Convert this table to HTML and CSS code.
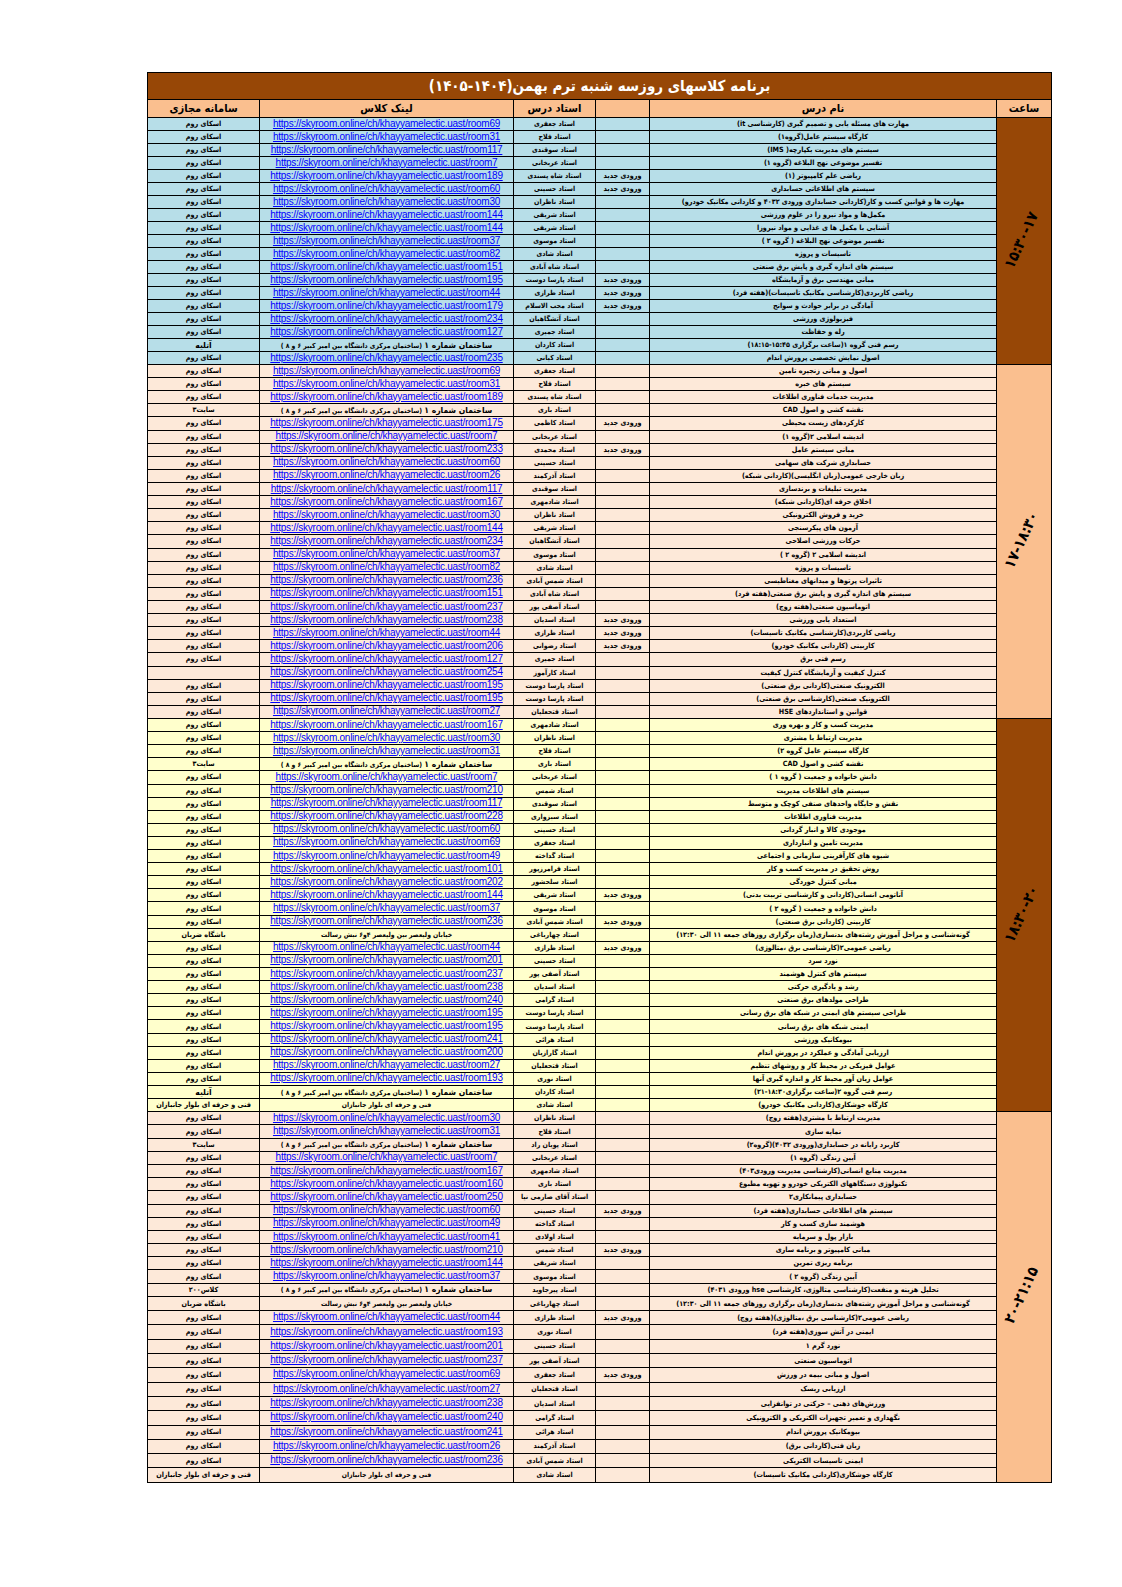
FILE: index.html
```html
<!DOCTYPE html>
<html lang="fa">
<head>
<meta charset="utf-8">
<title>برنامه کلاسهای روز سه شنبه</title>
<link rel="stylesheet" href="styles.css">
</head>
<body>
<div class="page">
<table class="sched" dir="rtl">
<colgroup>
<col class="c-time"><col class="c-name"><col class="c-entry"><col class="c-teacher"><col class="c-link"><col class="c-plat">
</colgroup>
<tbody>
<tr class="title"><td colspan="6">برنامه کلاسهای  روزسه شنبه ترم بهمن(۱۴۰۴-۱۴۰۵)</td></tr>
<tr class="head"><td>ساعت</td><td>نام درس</td><td></td><td>استاد درس</td><td>لینک کلاس</td><td>سامانه مجازی</td></tr>

<tr class="g1"><td class="time dark" rowspan="19"><span class="tl">۱۵:۳۰-۱۷</span></td><td>مهارت های مسئله یابی و تصمیم گیری (کارشناسی it)</td><td></td><td class="t">استاد جعفری</td><td class="l"><a href="https://skyroom.online/ch/khayyamelectic.uast/room69">https://skyroom.online/ch/khayyamelectic.uast/room69</a></td><td>اسکای روم</td></tr>
<tr class="g1"><td>کارگاه سیستم عامل(گروه۱)</td><td></td><td class="t">استاد فلاح</td><td class="l"><a href="https://skyroom.online/ch/khayyamelectic.uast/room31">https://skyroom.online/ch/khayyamelectic.uast/room31</a></td><td>اسکای روم</td></tr>
<tr class="g1"><td>سیستم های مدیریت یکپارچه( IMS)</td><td></td><td class="t">استاد سوقندی</td><td class="l"><a href="https://skyroom.online/ch/khayyamelectic.uast/room117">https://skyroom.online/ch/khayyamelectic.uast/room117</a></td><td>اسکای روم</td></tr>
<tr class="g1"><td>تفسیر موضوعی نهج البلاغه (گروه ۱)</td><td></td><td class="t">استاد عربخانی</td><td class="l"><a href="https://skyroom.online/ch/khayyamelectic.uast/room7">https://skyroom.online/ch/khayyamelectic.uast/room7</a></td><td>اسکای روم</td></tr>
<tr class="g1"><td>ریاضی علم کامپیوتر (۱)</td><td>ورودی جدید</td><td class="t">استاد شاه پسندی</td><td class="l"><a href="https://skyroom.online/ch/khayyamelectic.uast/room189">https://skyroom.online/ch/khayyamelectic.uast/room189</a></td><td>اسکای روم</td></tr>
<tr class="g1"><td>سیستم های اطلاعاتی حسابداری</td><td>ورودی جدید</td><td class="t">استاد حسینی</td><td class="l"><a href="https://skyroom.online/ch/khayyamelectic.uast/room60">https://skyroom.online/ch/khayyamelectic.uast/room60</a></td><td>اسکای روم</td></tr>
<tr class="g1"><td>مهارت ها و قوانین کسب و کار(کاردانی حسابداری ورودی ۴۰۳۲ و کاردانی مکانیک خودرو)</td><td></td><td class="t">استاد ناظران</td><td class="l"><a href="https://skyroom.online/ch/khayyamelectic.uast/room30">https://skyroom.online/ch/khayyamelectic.uast/room30</a></td><td>اسکای روم</td></tr>
<tr class="g1"><td>مکمل‌ها و مواد نیرو زا در علوم ورزشی</td><td></td><td class="t">استاد شریفی</td><td class="l"><a href="https://skyroom.online/ch/khayyamelectic.uast/room144">https://skyroom.online/ch/khayyamelectic.uast/room144</a></td><td>اسکای روم</td></tr>
<tr class="g1"><td>آشنایی با مکمل ها ی غذایی و مواد نیروزا</td><td></td><td class="t">استاد شریفی</td><td class="l"><a href="https://skyroom.online/ch/khayyamelectic.uast/room144">https://skyroom.online/ch/khayyamelectic.uast/room144</a></td><td>اسکای روم</td></tr>
<tr class="g1"><td>تفسیر موضوعی نهج البلاغه ( گروه ۲ )</td><td></td><td class="t">استاد موسوی</td><td class="l"><a href="https://skyroom.online/ch/khayyamelectic.uast/room37">https://skyroom.online/ch/khayyamelectic.uast/room37</a></td><td>اسکای روم</td></tr>
<tr class="g1"><td>تاسیسات و پروژه</td><td></td><td class="t">استاد شادی</td><td class="l"><a href="https://skyroom.online/ch/khayyamelectic.uast/room82">https://skyroom.online/ch/khayyamelectic.uast/room82</a></td><td>اسکای روم</td></tr>
<tr class="g1"><td>سیستم های اندازه گیری و پایش برق صنعتی</td><td></td><td class="t">استاد شاه آبادی</td><td class="l"><a href="https://skyroom.online/ch/khayyamelectic.uast/room151">https://skyroom.online/ch/khayyamelectic.uast/room151</a></td><td>اسکای روم</td></tr>
<tr class="g1"><td>مبانی  مهندسی برق و آزمایشگاه</td><td>ورودی جدید</td><td class="t">استاد پارسا دوست</td><td class="l"><a href="https://skyroom.online/ch/khayyamelectic.uast/room195">https://skyroom.online/ch/khayyamelectic.uast/room195</a></td><td>اسکای روم</td></tr>
<tr class="g1"><td>ریاضی کاربردی(کارشناسی مکانیک تاسیسات)(هفته فرد)</td><td>ورودی جدید</td><td class="t">استاد طرازی</td><td class="l"><a href="https://skyroom.online/ch/khayyamelectic.uast/room44">https://skyroom.online/ch/khayyamelectic.uast/room44</a></td><td>اسکای روم</td></tr>
<tr class="g1"><td>آمادگی در برابر حوادث و سوانح</td><td>ورودی جدید</td><td class="t">استاد محب الاسلام</td><td class="l"><a href="https://skyroom.online/ch/khayyamelectic.uast/room179">https://skyroom.online/ch/khayyamelectic.uast/room179</a></td><td>اسکای روم</td></tr>
<tr class="g1"><td>فیزیولوژی ورزشی</td><td></td><td class="t">استاد آتشگاهیان</td><td class="l"><a href="https://skyroom.online/ch/khayyamelectic.uast/room234">https://skyroom.online/ch/khayyamelectic.uast/room234</a></td><td>اسکای روم</td></tr>
<tr class="g1"><td>رله و حفاظت</td><td></td><td class="t">استاد جمیری</td><td class="l"><a href="https://skyroom.online/ch/khayyamelectic.uast/room127">https://skyroom.online/ch/khayyamelectic.uast/room127</a></td><td>اسکای روم</td></tr>
<tr class="g1"><td>رسم فنی گروه ۱(ساعت برگزاری ۱۵:۴۵-۱۸:۱۵)</td><td></td><td class="t">استاد کاردان</td><td class="loc"><span class="big">ساختمان شماره ۱</span>  (ساختمان مرکزی دانشگاه بین امیر کبیر ۶ و ۸ )</td><td class="pl">آتلیه</td></tr>
<tr class="g1"><td>اصول نمایش تخصصی پرورش اندام</td><td></td><td class="t">استاد کیانی</td><td class="l"><a href="https://skyroom.online/ch/khayyamelectic.uast/room235">https://skyroom.online/ch/khayyamelectic.uast/room235</a></td><td>اسکای روم</td></tr>

<tr class="g2"><td class="time light" rowspan="27"><span class="tl">۱۷-۱۸:۳۰</span></td><td>اصول و مبانی زنجیره تامین</td><td></td><td class="t">استاد جعفری</td><td class="l"><a href="https://skyroom.online/ch/khayyamelectic.uast/room69">https://skyroom.online/ch/khayyamelectic.uast/room69</a></td><td>اسکای روم</td></tr>
<tr class="g2"><td>سیستم های خبره</td><td></td><td class="t">استاد فلاح</td><td class="l"><a href="https://skyroom.online/ch/khayyamelectic.uast/room31">https://skyroom.online/ch/khayyamelectic.uast/room31</a></td><td>اسکای روم</td></tr>
<tr class="g2"><td>مدیریت خدمات فناوری اطلاعات</td><td></td><td class="t">استاد شاه پسندی</td><td class="l"><a href="https://skyroom.online/ch/khayyamelectic.uast/room189">https://skyroom.online/ch/khayyamelectic.uast/room189</a></td><td>اسکای روم</td></tr>
<tr class="g2"><td>نقشه کشی و اصول CAD</td><td></td><td class="t">استاد باری</td><td class="loc"><span class="big">ساختمان شماره ۱</span>  (ساختمان مرکزی دانشگاه بین امیر کبیر ۶ و ۸ )</td><td>سایت۳</td></tr>
<tr class="g2"><td>کارکردهای زیست محیطی</td><td>ورودی جدید</td><td class="t">استاد کاظمی</td><td class="l"><a href="https://skyroom.online/ch/khayyamelectic.uast/room175">https://skyroom.online/ch/khayyamelectic.uast/room175</a></td><td>اسکای روم</td></tr>
<tr class="g2"><td>اندیشه اسلامی ۲(گروه ۱)</td><td></td><td class="t">استاد عربخانی</td><td class="l"><a href="https://skyroom.online/ch/khayyamelectic.uast/room7">https://skyroom.online/ch/khayyamelectic.uast/room7</a></td><td>اسکای روم</td></tr>
<tr class="g2"><td>مبانی سیستم عامل</td><td>ورودی جدید</td><td class="t">استاد محمدی</td><td class="l"><a href="https://skyroom.online/ch/khayyamelectic.uast/room233">https://skyroom.online/ch/khayyamelectic.uast/room233</a></td><td>اسکای روم</td></tr>
<tr class="g2"><td>حسابداری شرکت های سهامی</td><td></td><td class="t">استاد حسینی</td><td class="l"><a href="https://skyroom.online/ch/khayyamelectic.uast/room60">https://skyroom.online/ch/khayyamelectic.uast/room60</a></td><td>اسکای روم</td></tr>
<tr class="g2"><td>زبان خارجی عمومی(زبان انگلیسی)(کاردانی شبکه)</td><td></td><td class="t">استاد آذرکمند</td><td class="l"><a href="https://skyroom.online/ch/khayyamelectic.uast/room26">https://skyroom.online/ch/khayyamelectic.uast/room26</a></td><td>اسکای روم</td></tr>
<tr class="g2"><td>مدیریت تبلیغات و برندسازی</td><td></td><td class="t">استاد سوقندی</td><td class="l"><a href="https://skyroom.online/ch/khayyamelectic.uast/room117">https://skyroom.online/ch/khayyamelectic.uast/room117</a></td><td>اسکای روم</td></tr>
<tr class="g2"><td>اخلاق حرفه ای(کاردانی شبکه)</td><td></td><td class="t">استاد شادمهری</td><td class="l"><a href="https://skyroom.online/ch/khayyamelectic.uast/room167">https://skyroom.online/ch/khayyamelectic.uast/room167</a></td><td>اسکای روم</td></tr>
<tr class="g2"><td>خرید و فروش الکترونیکی</td><td></td><td class="t">استاد ناظران</td><td class="l"><a href="https://skyroom.online/ch/khayyamelectic.uast/room30">https://skyroom.online/ch/khayyamelectic.uast/room30</a></td><td>اسکای روم</td></tr>
<tr class="g2"><td>آزمون های پیکرسنجی</td><td></td><td class="t">استاد شریفی</td><td class="l"><a href="https://skyroom.online/ch/khayyamelectic.uast/room144">https://skyroom.online/ch/khayyamelectic.uast/room144</a></td><td>اسکای روم</td></tr>
<tr class="g2"><td>حرکات ورزشی اصلاحی</td><td></td><td class="t">استاد آتشگاهیان</td><td class="l"><a href="https://skyroom.online/ch/khayyamelectic.uast/room234">https://skyroom.online/ch/khayyamelectic.uast/room234</a></td><td>اسکای روم</td></tr>
<tr class="g2"><td>اندیشه اسلامی ۲ (گروه ۲ )</td><td></td><td class="t">استاد موسوی</td><td class="l"><a href="https://skyroom.online/ch/khayyamelectic.uast/room37">https://skyroom.online/ch/khayyamelectic.uast/room37</a></td><td>اسکای روم</td></tr>
<tr class="g2"><td>تاسیسات و پروژه</td><td></td><td class="t">استاد شادی</td><td class="l"><a href="https://skyroom.online/ch/khayyamelectic.uast/room82">https://skyroom.online/ch/khayyamelectic.uast/room82</a></td><td>اسکای روم</td></tr>
<tr class="g2"><td>تاثیرات پرتوها و میدانهای مغناطیسی</td><td></td><td class="t">استاد شمس آبادی</td><td class="l"><a href="https://skyroom.online/ch/khayyamelectic.uast/room236">https://skyroom.online/ch/khayyamelectic.uast/room236</a></td><td>اسکای روم</td></tr>
<tr class="g2"><td>سیستم های اندازه گیری و پایش برق صنعتی(هفته فرد)</td><td></td><td class="t">استاد شاه آبادی</td><td class="l"><a href="https://skyroom.online/ch/khayyamelectic.uast/room151">https://skyroom.online/ch/khayyamelectic.uast/room151</a></td><td>اسکای روم</td></tr>
<tr class="g2"><td>اتوماسیون صنعتی(هفته زوج)</td><td></td><td class="t">استاد آصفی پور</td><td class="l"><a href="https://skyroom.online/ch/khayyamelectic.uast/room237">https://skyroom.online/ch/khayyamelectic.uast/room237</a></td><td>اسکای روم</td></tr>
<tr class="g2"><td>استعداد یابی ورزشی</td><td>ورودی جدید</td><td class="t">استاد اسدیان</td><td class="l"><a href="https://skyroom.online/ch/khayyamelectic.uast/room238">https://skyroom.online/ch/khayyamelectic.uast/room238</a></td><td>اسکای روم</td></tr>
<tr class="g2"><td>ریاضی کاربردی(کارشناسی مکانیک تاسیسات)</td><td>ورودی جدید</td><td class="t">استاد طرازی</td><td class="l"><a href="https://skyroom.online/ch/khayyamelectic.uast/room44">https://skyroom.online/ch/khayyamelectic.uast/room44</a></td><td>اسکای روم</td></tr>
<tr class="g2"><td>کاربینی (کاردانی مکانیک خودرو)</td><td>ورودی جدید</td><td class="t">استاد رضوانی</td><td class="l"><a href="https://skyroom.online/ch/khayyamelectic.uast/room206">https://skyroom.online/ch/khayyamelectic.uast/room206</a></td><td>اسکای روم</td></tr>
<tr class="g2"><td>رسم فنی برق</td><td></td><td class="t">استاد جمیری</td><td class="l"><a href="https://skyroom.online/ch/khayyamelectic.uast/room127">https://skyroom.online/ch/khayyamelectic.uast/room127</a></td><td>اسکای روم</td></tr>
<tr class="g2"><td>کنترل کیفیت و آزمایشگاه کنترل کیفیت</td><td></td><td class="t">استاد کارآموز</td><td class="l"><a href="https://skyroom.online/ch/khayyamelectic.uast/room254">https://skyroom.online/ch/khayyamelectic.uast/room254</a></td><td></td></tr>
<tr class="g2"><td>الکترونیک صنعتی(کاردانی برق صنعتی)</td><td></td><td class="t">استاد پارسا دوست</td><td class="l"><a href="https://skyroom.online/ch/khayyamelectic.uast/room195">https://skyroom.online/ch/khayyamelectic.uast/room195</a></td><td>اسکای روم</td></tr>
<tr class="g2"><td>الکترونیک صنعتی(کارشناسی  برق صنعتی)</td><td></td><td class="t">استاد پارسا دوست</td><td class="l"><a href="https://skyroom.online/ch/khayyamelectic.uast/room195">https://skyroom.online/ch/khayyamelectic.uast/room195</a></td><td>اسکای روم</td></tr>
<tr class="g2"><td>قوانین و استانداردهای HSE</td><td></td><td class="t">استاد فتحعلیان</td><td class="l"><a href="https://skyroom.online/ch/khayyamelectic.uast/room27">https://skyroom.online/ch/khayyamelectic.uast/room27</a></td><td>اسکای روم</td></tr>

<tr class="g3"><td class="time dark" rowspan="30"><span class="tl">۱۸:۳۰-۲۰</span></td><td>مدیریت کسب و کار و بهره وری</td><td></td><td class="t">استاد شادمهری</td><td class="l"><a href="https://skyroom.online/ch/khayyamelectic.uast/room167">https://skyroom.online/ch/khayyamelectic.uast/room167</a></td><td>اسکای روم</td></tr>
<tr class="g3"><td>مدیریت ارتباط با مشتری</td><td></td><td class="t">استاد ناظران</td><td class="l"><a href="https://skyroom.online/ch/khayyamelectic.uast/room30">https://skyroom.online/ch/khayyamelectic.uast/room30</a></td><td>اسکای روم</td></tr>
<tr class="g3"><td>کارگاه سیستم عامل گروه ۲)</td><td></td><td class="t">استاد فلاح</td><td class="l"><a href="https://skyroom.online/ch/khayyamelectic.uast/room31">https://skyroom.online/ch/khayyamelectic.uast/room31</a></td><td>اسکای روم</td></tr>
<tr class="g3"><td>نقشه کشی و اصول CAD</td><td></td><td class="t">استاد باری</td><td class="loc"><span class="big">ساختمان شماره ۱</span>  (ساختمان مرکزی دانشگاه بین امیر کبیر ۶ و ۸ )</td><td>سایت۳</td></tr>
<tr class="g3"><td>دانش خانواده و جمعیت ( گروه ۱ )</td><td></td><td class="t">استاد عربخانی</td><td class="l"><a href="https://skyroom.online/ch/khayyamelectic.uast/room7">https://skyroom.online/ch/khayyamelectic.uast/room7</a></td><td>اسکای روم</td></tr>
<tr class="g3"><td>سیستم  های اطلاعات مدیریت</td><td></td><td class="t">استاد شمس</td><td class="l"><a href="https://skyroom.online/ch/khayyamelectic.uast/room210">https://skyroom.online/ch/khayyamelectic.uast/room210</a></td><td>اسکای روم</td></tr>
<tr class="g3"><td>نقش و جایگاه واحدهای صنفی کوچک و متوسط</td><td></td><td class="t">استاد سوقندی</td><td class="l"><a href="https://skyroom.online/ch/khayyamelectic.uast/room117">https://skyroom.online/ch/khayyamelectic.uast/room117</a></td><td>اسکای روم</td></tr>
<tr class="g3"><td>مدیریت فناوری اطلاعات</td><td></td><td class="t">استاد سبزواری</td><td class="l"><a href="https://skyroom.online/ch/khayyamelectic.uast/room228">https://skyroom.online/ch/khayyamelectic.uast/room228</a></td><td>اسکای روم</td></tr>
<tr class="g3"><td>موجودی کالا و انبار گردانی</td><td></td><td class="t">استاد حسینی</td><td class="l"><a href="https://skyroom.online/ch/khayyamelectic.uast/room60">https://skyroom.online/ch/khayyamelectic.uast/room60</a></td><td>اسکای روم</td></tr>
<tr class="g3"><td>مدیریت تامین و انبارداری</td><td></td><td class="t">استاد جعفری</td><td class="l"><a href="https://skyroom.online/ch/khayyamelectic.uast/room69">https://skyroom.online/ch/khayyamelectic.uast/room69</a></td><td>اسکای روم</td></tr>
<tr class="g3"><td>شیوه های کارآفرینی سازمانی و اجتماعی</td><td></td><td class="t">استاد گداخته</td><td class="l"><a href="https://skyroom.online/ch/khayyamelectic.uast/room49">https://skyroom.online/ch/khayyamelectic.uast/room49</a></td><td>اسکای روم</td></tr>
<tr class="g3"><td>روش تحقیق در مدیریت کسب و کار</td><td></td><td class="t">استاد فرامرزپور</td><td class="l"><a href="https://skyroom.online/ch/khayyamelectic.uast/room101">https://skyroom.online/ch/khayyamelectic.uast/room101</a></td><td>اسکای روم</td></tr>
<tr class="g3"><td>مبانی کنترل خوردگی</td><td></td><td class="t">استاد سلحشور</td><td class="l"><a href="https://skyroom.online/ch/khayyamelectic.uast/room202">https://skyroom.online/ch/khayyamelectic.uast/room202</a></td><td>اسکای روم</td></tr>
<tr class="g3"><td>آناتومی انسانی(کاردانی و کارشناسی تربیت بدنی)</td><td>ورودی جدید</td><td class="t">استاد شریفی</td><td class="l"><a href="https://skyroom.online/ch/khayyamelectic.uast/room144">https://skyroom.online/ch/khayyamelectic.uast/room144</a></td><td>اسکای روم</td></tr>
<tr class="g3"><td>دانش خانواده و جمعیت ( گروه ۲ )</td><td></td><td class="t">استاد موسوی</td><td class="l"><a href="https://skyroom.online/ch/khayyamelectic.uast/room37">https://skyroom.online/ch/khayyamelectic.uast/room37</a></td><td>اسکای روم</td></tr>
<tr class="g3"><td>کاربینی (کاردانی برق صنعتی)</td><td>ورودی جدید</td><td class="t">استاد شمس آبادی</td><td class="l"><a href="https://skyroom.online/ch/khayyamelectic.uast/room236">https://skyroom.online/ch/khayyamelectic.uast/room236</a></td><td>اسکای روم</td></tr>
<tr class="g3"><td>گونه‌شناسی و مراحل آموزش رشته‌های بدنسازی(زمان برگزاری روزهای جمعه ۱۱ الی ۱۲:۳۰)</td><td></td><td class="t">استاد چهارباغی</td><td class="loc">خیابان ولیعصر بین ولیعصر ۴و۶ نبش رسالت</td><td>باشگاه ضربان</td></tr>
<tr class="g3"><td>ریاضی عمومی۲(کارشناسی برق ،متالوژی)</td><td>ورودی جدید</td><td class="t">استاد طرازی</td><td class="l"><a href="https://skyroom.online/ch/khayyamelectic.uast/room44">https://skyroom.online/ch/khayyamelectic.uast/room44</a></td><td>اسکای روم</td></tr>
<tr class="g3"><td>نورد سرد</td><td></td><td class="t">استاد حسینی</td><td class="l"><a href="https://skyroom.online/ch/khayyamelectic.uast/room201">https://skyroom.online/ch/khayyamelectic.uast/room201</a></td><td>اسکای روم</td></tr>
<tr class="g3"><td>سیستم های کنترل هوشمند</td><td></td><td class="t">استاد آصفی پور</td><td class="l"><a href="https://skyroom.online/ch/khayyamelectic.uast/room237">https://skyroom.online/ch/khayyamelectic.uast/room237</a></td><td>اسکای روم</td></tr>
<tr class="g3"><td>رشد و یادگیری حرکتی</td><td></td><td class="t">استاد اسدیان</td><td class="l"><a href="https://skyroom.online/ch/khayyamelectic.uast/room238">https://skyroom.online/ch/khayyamelectic.uast/room238</a></td><td>اسکای روم</td></tr>
<tr class="g3"><td>طراحی مولدهای برق صنعتی</td><td></td><td class="t">استاد گرامی</td><td class="l"><a href="https://skyroom.online/ch/khayyamelectic.uast/room240">https://skyroom.online/ch/khayyamelectic.uast/room240</a></td><td>اسکای روم</td></tr>
<tr class="g3"><td>طراحی سیستم های ایمنی در شبکه های برق رسانی</td><td></td><td class="t">استاد پارسا دوست</td><td class="l"><a href="https://skyroom.online/ch/khayyamelectic.uast/room195">https://skyroom.online/ch/khayyamelectic.uast/room195</a></td><td>اسکای روم</td></tr>
<tr class="g3"><td>ایمنی شبکه های برق رسانی</td><td></td><td class="t">استاد پارسا دوست</td><td class="l"><a href="https://skyroom.online/ch/khayyamelectic.uast/room195">https://skyroom.online/ch/khayyamelectic.uast/room195</a></td><td>اسکای روم</td></tr>
<tr class="g3"><td>بیومکانیک ورزشی</td><td></td><td class="t">استاد هرائی</td><td class="l"><a href="https://skyroom.online/ch/khayyamelectic.uast/room241">https://skyroom.online/ch/khayyamelectic.uast/room241</a></td><td>اسکای روم</td></tr>
<tr class="g3"><td>ارزیابی آمادگی و عملکرد در پرورش اندام</td><td></td><td class="t">استاد گارازیان</td><td class="l"><a href="https://skyroom.online/ch/khayyamelectic.uast/room200">https://skyroom.online/ch/khayyamelectic.uast/room200</a></td><td>اسکای روم</td></tr>
<tr class="g3"><td>عوامل فیزیکی در محیط کار و روشهای تنظیم</td><td></td><td class="t">استاد فتحعلیان</td><td class="l"><a href="https://skyroom.online/ch/khayyamelectic.uast/room27">https://skyroom.online/ch/khayyamelectic.uast/room27</a></td><td>اسکای روم</td></tr>
<tr class="g3"><td>عوامل زیان آور محیط کار و اندازه گیری آنها</td><td></td><td class="t">استاد نوری</td><td class="l"><a href="https://skyroom.online/ch/khayyamelectic.uast/room193">https://skyroom.online/ch/khayyamelectic.uast/room193</a></td><td>اسکای روم</td></tr>
<tr class="g3"><td>رسم فنی گروه ۲(ساعت برگزاری۱۸:۳۰-۲۱)</td><td></td><td class="t">استاد کاردان</td><td class="loc"><span class="big">ساختمان شماره ۱</span>  (ساختمان مرکزی دانشگاه بین امیر کبیر ۶ و ۸ )</td><td class="pl">آتلیه</td></tr>
<tr class="g3"><td>کارگاه جوشکاری(کاردانی مکانیک خودرو)</td><td></td><td class="t">استاد شادی</td><td class="loc">فنی و حرفه ای بلوار جانبازان</td><td>فنی و حرفه ای بلوار جانبازان</td></tr>

<tr class="g4"><td class="time light" rowspan="27"><span class="tl">۲۰-۲۱:۱۵</span></td><td>مدیریت ارتباط با مشتری(هفته زوج)</td><td></td><td class="t">استاد ناظران</td><td class="l"><a href="https://skyroom.online/ch/khayyamelectic.uast/room30">https://skyroom.online/ch/khayyamelectic.uast/room30</a></td><td>اسکای روم</td></tr>
<tr class="g4"><td>نمایه سازی</td><td></td><td class="t">استاد فلاح</td><td class="l"><a href="https://skyroom.online/ch/khayyamelectic.uast/room31">https://skyroom.online/ch/khayyamelectic.uast/room31</a></td><td>اسکای روم</td></tr>
<tr class="g4"><td>کاربرد رایانه در حسابداری(ورودی ۴۰۳۲)(گروه۲)</td><td></td><td class="t">استاد پویان راد</td><td class="loc"><span class="big">ساختمان شماره ۱</span>  (ساختمان مرکزی دانشگاه بین امیر کبیر ۶ و ۸ )</td><td>سایت۳</td></tr>
<tr class="g4"><td>آیین زندگی (گروه ۱)</td><td></td><td class="t">استاد عربخانی</td><td class="l"><a href="https://skyroom.online/ch/khayyamelectic.uast/room7">https://skyroom.online/ch/khayyamelectic.uast/room7</a></td><td>اسکای روم</td></tr>
<tr class="g4"><td>مدیریت منابع انسانی(کارشناسی مدیریت ورودی۴۰۳)</td><td></td><td class="t">استاد شادمهری</td><td class="l"><a href="https://skyroom.online/ch/khayyamelectic.uast/room167">https://skyroom.online/ch/khayyamelectic.uast/room167</a></td><td>اسکای روم</td></tr>
<tr class="g4"><td>تکنولوژی دستگاههای الکتریکی خودرو و تهویه مطبوع</td><td></td><td class="t">استاد باری</td><td class="l"><a href="https://skyroom.online/ch/khayyamelectic.uast/room160">https://skyroom.online/ch/khayyamelectic.uast/room160</a></td><td>اسکای روم</td></tr>
<tr class="g4"><td>حسابداری پیمانکاری۲</td><td></td><td class="t">استاد آقای صارمی نیا</td><td class="l"><a href="https://skyroom.online/ch/khayyamelectic.uast/room250">https://skyroom.online/ch/khayyamelectic.uast/room250</a></td><td>اسکای روم</td></tr>
<tr class="g4"><td>سیستم های اطلاعاتی حسابداری(هفته فرد)</td><td>ورودی جدید</td><td class="t">استاد حسینی</td><td class="l"><a href="https://skyroom.online/ch/khayyamelectic.uast/room60">https://skyroom.online/ch/khayyamelectic.uast/room60</a></td><td>اسکای روم</td></tr>
<tr class="g4"><td>هوشمند سازی کسب و کار</td><td></td><td class="t">استاد گداخته</td><td class="l"><a href="https://skyroom.online/ch/khayyamelectic.uast/room49">https://skyroom.online/ch/khayyamelectic.uast/room49</a></td><td>اسکای روم</td></tr>
<tr class="g4"><td>بازار پول و سرمایه</td><td></td><td class="t">استاد اولادی</td><td class="l"><a href="https://skyroom.online/ch/khayyamelectic.uast/room41">https://skyroom.online/ch/khayyamelectic.uast/room41</a></td><td>اسکای روم</td></tr>
<tr class="g4"><td>مبانی کامپیوتر و برنامه سازی</td><td>ورودی جدید</td><td class="t">استاد شمس</td><td class="l"><a href="https://skyroom.online/ch/khayyamelectic.uast/room210">https://skyroom.online/ch/khayyamelectic.uast/room210</a></td><td>اسکای روم</td></tr>
<tr class="g4"><td>برنامه ریزی تمرین</td><td></td><td class="t">استاد شریفی</td><td class="l"><a href="https://skyroom.online/ch/khayyamelectic.uast/room144">https://skyroom.online/ch/khayyamelectic.uast/room144</a></td><td>اسکای روم</td></tr>
<tr class="g4"><td>آیین زندگی (گروه ۲ )</td><td></td><td class="t">استاد موسوی</td><td class="l"><a href="https://skyroom.online/ch/khayyamelectic.uast/room37">https://skyroom.online/ch/khayyamelectic.uast/room37</a></td><td>اسکای روم</td></tr>
<tr class="g4"><td>تحلیل هزینه و منفعت(کارشناسی متالوژی، کارشناسی hse ورودی ۴۰۳۱)</td><td></td><td class="t">استاد پیرجاوید</td><td class="loc"><span class="big">ساختمان شماره ۱</span>  (ساختمان مرکزی دانشگاه بین امیر کبیر ۶ و ۸ )</td><td>کلاس۲۰۰</td></tr>
<tr class="g4 tall"><td>گونه‌شناسی و مراحل آموزش رشته‌های بدنسازی(زمان برگزاری روزهای جمعه ۱۱ الی ۱۲:۳۰)</td><td></td><td class="t">استاد چهارباغی</td><td class="loc">خیابان ولیعصر بین ولیعصر ۴و۶ نبش رسالت</td><td>باشگاه ضربان</td></tr>
<tr class="g4 tall"><td>ریاضی عمومی۲(کارشناسی برق ،متالوژی)(هفته زوج)</td><td>ورودی جدید</td><td class="t">استاد طرازی</td><td class="l"><a href="https://skyroom.online/ch/khayyamelectic.uast/room44">https://skyroom.online/ch/khayyamelectic.uast/room44</a></td><td>اسکای روم</td></tr>
<tr class="g4 tall"><td>ایمنی در آتش سوزی(هفته فرد)</td><td></td><td class="t">استاد نوری</td><td class="l"><a href="https://skyroom.online/ch/khayyamelectic.uast/room193">https://skyroom.online/ch/khayyamelectic.uast/room193</a></td><td>اسکای روم</td></tr>
<tr class="g4 tall"><td>نورد گرم ۱</td><td></td><td class="t">استاد حسینی</td><td class="l"><a href="https://skyroom.online/ch/khayyamelectic.uast/room201">https://skyroom.online/ch/khayyamelectic.uast/room201</a></td><td>اسکای روم</td></tr>
<tr class="g4 tall"><td>اتوماسیون صنعتی</td><td></td><td class="t">استاد آصفی پور</td><td class="l"><a href="https://skyroom.online/ch/khayyamelectic.uast/room237">https://skyroom.online/ch/khayyamelectic.uast/room237</a></td><td>اسکای روم</td></tr>
<tr class="g4 tall"><td>اصول و مبانی بیمه در ورزش</td><td>ورودی جدید</td><td class="t">استاد جعفری</td><td class="l"><a href="https://skyroom.online/ch/khayyamelectic.uast/room69">https://skyroom.online/ch/khayyamelectic.uast/room69</a></td><td>اسکای روم</td></tr>
<tr class="g4 tall"><td>ارزیابی ریسک</td><td></td><td class="t">استاد فتحعلیان</td><td class="l"><a href="https://skyroom.online/ch/khayyamelectic.uast/room27">https://skyroom.online/ch/khayyamelectic.uast/room27</a></td><td>اسکای روم</td></tr>
<tr class="g4 tall"><td>ورزش‌های ذهنی – حرکتی در توانفزایی</td><td></td><td class="t">استاد اسدیان</td><td class="l"><a href="https://skyroom.online/ch/khayyamelectic.uast/room238">https://skyroom.online/ch/khayyamelectic.uast/room238</a></td><td>اسکای روم</td></tr>
<tr class="g4 tall"><td>نگهداری و تعمیر تجهیزات الکتریکی و الکترونیکی</td><td></td><td class="t">استاد گرامی</td><td class="l"><a href="https://skyroom.online/ch/khayyamelectic.uast/room240">https://skyroom.online/ch/khayyamelectic.uast/room240</a></td><td>اسکای روم</td></tr>
<tr class="g4 tall"><td>بیومکانیک پرورش اندام</td><td></td><td class="t">استاد هرائی</td><td class="l"><a href="https://skyroom.online/ch/khayyamelectic.uast/room241">https://skyroom.online/ch/khayyamelectic.uast/room241</a></td><td>اسکای روم</td></tr>
<tr class="g4 tall"><td>زبان فنی(کاردانی برق)</td><td></td><td class="t">استاد آذرکمند</td><td class="l"><a href="https://skyroom.online/ch/khayyamelectic.uast/room26">https://skyroom.online/ch/khayyamelectic.uast/room26</a></td><td>اسکای روم</td></tr>
<tr class="g4 tall"><td>ایمنی تاسیسات الکتریکی</td><td></td><td class="t">استاد شمس آبادی</td><td class="l"><a href="https://skyroom.online/ch/khayyamelectic.uast/room236">https://skyroom.online/ch/khayyamelectic.uast/room236</a></td><td>اسکای روم</td></tr>
<tr class="g4 tall"><td>کارگاه جوشکاری(کاردانی مکانیک تاسیسات)</td><td></td><td class="t">استاد شادی</td><td class="loc">فنی و حرفه ای بلوار جانبازان</td><td>فنی و حرفه ای بلوار جانبازان</td></tr>
</tbody>
</table>
</div>
</body>
</html>
```

FILE: styles.css
```css
html, body {
  margin: 0;
  padding: 0;
  background: #ffffff;
}

.page {
  padding: 72px 0 0 147px;
}

.sched {
  border-collapse: collapse;
  table-layout: fixed;
  width: 904px;
  direction: rtl;
  font-family: "DejaVu Sans Condensed", "DejaVu Sans", sans-serif;
  border: 1px solid #000;
}

.c-time { width: 55px; }
.c-name { width: 347px; }
.c-entry { width: 54px; }
.c-teacher { width: 82px; }
.c-link { width: 254px; }
.c-plat { width: 112px; }

.sched td {
  border: 1px solid #000;
  padding: 0 2px;
  text-align: center;
  vertical-align: middle;
  white-space: nowrap;
  overflow: hidden;
  font-size: 7.2px;
  font-weight: bold;
  line-height: 10px;
  color: #000;
}

.sched tr { height: 13px; }
.sched tr.g2, .sched tr.g3 { height: 13.12px; }
.sched tr.g4 { height: 13.2px; }
.sched tr.g4.tall { height: 14.3px; }

.title td {
  height: 26px;
  background: #974706;
  color: #ffffff;
  font-size: 15px;
  line-height: 24px;
  padding: 0;
}

.sched tr.head { height: 18px; }

.head td {
  background: #fabf8f;
  font-size: 11px;
  line-height: 16px;
}

.g1 td { background: #b7dee8; }
.g2 td { background: #fde9d9; }
.g3 td { background: #ffffcc; }
.g4 td { background: #fde9d9; }

.sched td.time { padding: 0; overflow: visible; }
.sched td.dark { background: #974706; }
.sched td.light { background: #fabf8f; }

.tl {
  display: inline-block;
  direction: ltr;
  unicode-bidi: isolate;
  transform: rotate(-65deg);
  font-size: 15px;
  font-weight: bold;
  color: #000;
  white-space: nowrap;
}

.sched td.t {
  padding: 0;
  font-size: 7px;
}

.sched td.l a {
  font-family: "Liberation Sans", sans-serif;
  font-size: 10px;
  letter-spacing: -0.25px;
  font-weight: normal;
  color: #0000ff;
  text-decoration: underline;
  direction: ltr;
  unicode-bidi: isolate;
}

.sched td.loc { font-size: 6.8px; }
.loc .big { font-size: 8.5px; }
.sched td.pl { font-size: 8.5px; }
```
